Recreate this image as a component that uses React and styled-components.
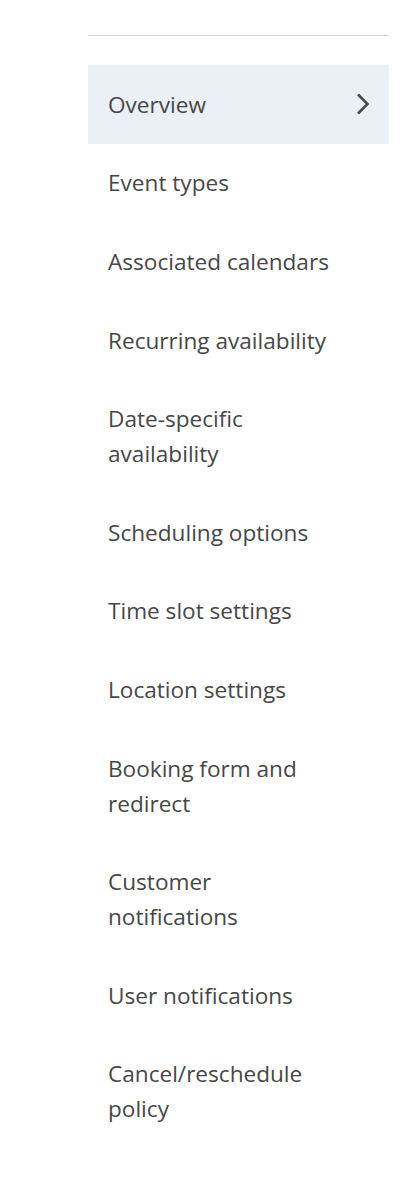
import styled, { createGlobalStyle } from 'styled-components';

const GlobalStyle = createGlobalStyle`
  body {
    margin: 0;
    background: #fff;
    font-family: "Open Sans", "Liberation Sans", sans-serif;
  }
`;

const Page = styled.div`
  padding: 35px 13px 0 88px;
`;

const Nav = styled.nav`
  border-top: 1px solid #d4d4d4;
  padding-top: 29px;
`;

const List = styled.ul`
  list-style: none;
  margin: 0;
  padding: 0;
`;

const Item = styled.li`
  display: flex;
  align-items: center;
  justify-content: space-between;
  padding: 21.8px 18px 21.8px 20px;
  background: ${(props) => (props.active ? '#ebf0f6' : 'transparent')};
  color: #474747;
  font-size: 22.6px;
  font-weight: 400;
  line-height: 35px;
  cursor: pointer;
`;

const Label = styled.span`
  max-width: 230px;
`;

const Chevron = () => (
  <svg width="16" height="24" viewBox="0 0 16 24" fill="none">
    <path d="M3 2.5 L12.5 12 L3 21.5" stroke="#4a4a4a" strokeWidth="2.6" />
  </svg>
);

const items = [
  'Overview',
  'Event types',
  'Associated calendars',
  'Recurring availability',
  'Date-specific availability',
  'Scheduling options',
  'Time slot settings',
  'Location settings',
  'Booking form and redirect',
  'Customer notifications',
  'User notifications',
  'Cancel/reschedule policy',
];

export default function App() {
  return (
    <>
      <GlobalStyle />
      <Page>
        <Nav>
          <List>
            {items.map((label, i) => (
              <Item key={label} active={i === 0}>
                <Label>{label}</Label>
                {i === 0 && <Chevron />}
              </Item>
            ))}
          </List>
        </Nav>
      </Page>
    </>
  );
}
